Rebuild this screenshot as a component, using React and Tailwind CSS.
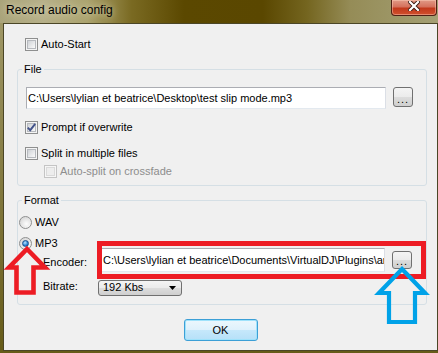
import React from 'react';

const Checkbox = ({ checked, disabled }) => (
    <span className={`relative flex h-[13px] w-[13px] shrink-0 items-center justify-center border ${disabled ? 'border-[#c4c4c4] bg-[#f6f6f6]' : 'border-[#8e8f8f] bg-[#f4f4f4]'}`}>
        <span className={`h-[9px] w-[9px] border ${disabled ? 'border-[#dadada] bg-[#ededed]' : 'border-[#b6b9be] bg-gradient-to-br from-[#cfd2d6] to-[#fafafa]'}`} />
        {checked && (
            <svg className="absolute inset-0" width="11" height="11" viewBox="0 0 11 11">
                <path d="M1.8 5.6 L4.2 8.2 L9.2 1.8" fill="none" stroke="#42528a" strokeWidth="1.9" />
            </svg>
        )}
    </span>
);

const Radio = ({ checked }) => (
    <span className="flex h-[13px] w-[13px] shrink-0 items-center justify-center rounded-full border border-[#8e8f8f] bg-[radial-gradient(circle_at_65%_70%,#ffffff,#dcdcdc_70%)]">
        {checked ? (
            <span className="h-[7px] w-[7px] rounded-full border border-[#1b4f8c] bg-[radial-gradient(circle_at_40%_35%,#bfe6ff,#2f8ad6_55%,#0c4a93)]" />
        ) : (
            <span className="h-[9px] w-[9px] rounded-full bg-[radial-gradient(circle_at_60%_65%,#fdfdfd,#d4d4d4)]" />
        )}
    </span>
);

const DotsButton = ({ className }) => (
    <div className={`flex w-[20px] shrink-0 items-end justify-center rounded-[3px] border border-[#707070] bg-[linear-gradient(180deg,#f4f4f4_0%,#ebebeb_50%,#dddddd_50%,#cfcfcf_100%)] pb-[3px] text-[11px] leading-[7px] tracking-[1px] ${className}`}>
        ...
    </div>
);

const CloseButton = () => (
    <div className="mr-[1px] flex h-[16px] w-[46px] items-start justify-center rounded-b-[4px] border border-t-0 border-[#4f1f14] bg-[linear-gradient(180deg,#e19a86_0%,#d5715c_45%,#c2391b_55%,#d0502e_100%)] pt-[1px] shadow-[inset_0_0_0_1px_rgba(255,210,190,0.45)]">
        <svg width="12" height="10" viewBox="0 0 12 10">
            <path d="M2 1 L10 9 M10 1 L2 9" stroke="#3a1a12" strokeWidth="4" strokeLinecap="square" />
            <path d="M2 1 L10 9 M10 1 L2 9" stroke="#ffffff" strokeWidth="2.2" strokeLinecap="square" />
        </svg>
    </div>
);

const Row = ({ children, className }) => (
    <div className={`flex h-[13px] items-center leading-[13px] ${className}`}>{children}</div>
);

export default function App() {
    return (
        <div className="relative flex h-[353px] w-[438px] flex-col overflow-hidden bg-[linear-gradient(180deg,#a39b6b,#665b18)] font-['Liberation_Sans',Arial,sans-serif] text-[11px] text-black">
            {/* Title bar */}
            <div className="flex h-[23px] shrink-0 items-start justify-between bg-[linear-gradient(90deg,#aaa47a_0%,#b6b089_10%,#aba36e_20%,#7a6a22_30%,#5b4800_42%,#5a4700_60%,#74651f_70%,#958c57_80%,#a4a074_100%)]">
                <span className="pl-[6px] pt-[3px] text-[12px] leading-[14px] [text-shadow:0_0_7px_#e8e4c8]">Record audio config</span>
                <CloseButton />
            </div>

            {/* Client area */}
            <div className="ml-[3px] flex h-[328px] w-[435px] shrink-0 flex-col border border-[#4b4626] bg-[#f0f0f0]">
                <Row className="mt-[14px] gap-[3px] pl-[21px]">
                    <Checkbox />
                    <span>Auto-Start</span>
                </Row>

                {/* File */}
                <fieldset className="ml-[13px] mt-[11px] w-[410px] rounded-[3px] border border-[#d5dfe5] pb-[7px]">
                    <legend className="ml-[4px] px-[2px] leading-[14px]">File</legend>
                    <div className="flex items-start pl-[8px] pt-[11px]">
                        <div className="flex h-[22px] w-[360px] items-center overflow-hidden whitespace-nowrap border border-[#abadb3] border-b-[#e3e9ef] border-r-[#dbdfe6] bg-white pl-[1px] leading-[13px]">
                            {"C:\\Users\\lylian et beatrice\\Desktop\\test slip mode.mp3"}
                        </div>
                        <DotsButton className="ml-[7px] h-[20px]" />
                    </div>
                    <Row className="mt-[12px] gap-[3px] pl-[7px]">
                        <Checkbox checked />
                        <span>Prompt if overwrite</span>
                    </Row>
                    <Row className="mt-[13px] gap-[3px] pl-[7px]">
                        <Checkbox />
                        <span>Split in multiple files</span>
                    </Row>
                    <Row className="mt-[5px] gap-[3px] pl-[26px]">
                        <Checkbox disabled />
                        <span className="text-[#8d8d8d]">Auto-split on crossfade</span>
                    </Row>
                </fieldset>

                {/* Format */}
                <fieldset className="ml-[13px] mt-[7px] w-[410px] rounded-[3px] border border-[#d5dfe5] pb-[8px]">
                    <legend className="ml-[4px] px-[2px] leading-[14px]">Format</legend>
                    <Row className="mt-[9px] gap-[3px] pl-[1px]">
                        <Radio />
                        <span>WAV</span>
                    </Row>
                    <div className="mt-[8px] flex h-[11px] items-start gap-[3px] pl-[1px] leading-[13px]">
                        <Radio checked />
                        <span>MP3</span>
                    </div>
                    <div className="flex h-[24px] items-center pl-[25px]">
                        <span className="w-[58px] shrink-0 pt-[4px] leading-[13px]">Encoder:</span>
                        <div className="flex h-[24px] w-[284px] items-center overflow-hidden whitespace-nowrap border border-[#abadb3] border-b-[#e3e9ef] border-r-[#dbdfe6] bg-white pl-[1px] leading-[13px]">
                            {"C:\\Users\\lylian et beatrice\\Documents\\VirtualDJ\\Plugins\\archive\\lame_enc.dll"}
                        </div>
                        <DotsButton className="ml-[7px] h-[18px]" />
                    </div>
                    <div className="mt-[8px] flex h-[16px] items-center pl-[25px]">
                        <span className="w-[55px] shrink-0 pb-[3px] leading-[13px]">Bitrate:</span>
                        <div className="flex h-[16px] w-[84px] items-center justify-between rounded-[3px] border border-[#707070] bg-[linear-gradient(180deg,#f4f4f4_0%,#ebebeb_50%,#dddddd_50%,#cfcfcf_100%)] pl-[4px] pr-[5px] leading-[13px]">
                            <span className="pb-[2px]">192 Kbs</span>
                            <svg width="7" height="4" viewBox="0 0 7 4">
                                <path d="M0 0 L7 0 L3.5 4 Z" fill="#000" />
                            </svg>
                        </div>
                    </div>
                </fieldset>

                <div className="mt-[14px] flex justify-center">
                    <button className="flex h-[22px] w-[74px] items-center justify-center rounded-[3px] border border-[#3c9fd6] bg-[linear-gradient(180deg,#ecf7fd_0%,#def1fc_50%,#c6e8fb_50%,#b6e0f8_100%)] leading-[13px] shadow-[inset_0_0_0_1px_#9fe2fb]">
                        OK
                    </button>
                </div>
            </div>

            {/* Annotations drawn over the dialog */}
            <svg className="pointer-events-none absolute inset-0" width="438" height="353" viewBox="0 0 438 353">
                <rect x="99.5" y="243.5" width="324" height="33" fill="none" stroke="#ed1c24" strokeWidth="5" />
                <polygon points="27,249 45,267.5 33.5,267.5 33.5,292.5 16.5,292.5 16.5,267.5 9,267.5" fill="none" stroke="#ed1c24" strokeWidth="4.6" strokeLinejoin="miter" />
                <polygon points="402,269 425,293 415,293 415,322 389,322 389,293 379,293" fill="none" stroke="#00a2e8" strokeWidth="4.2" strokeLinejoin="miter" />
            </svg>
        </div>
    );
}
